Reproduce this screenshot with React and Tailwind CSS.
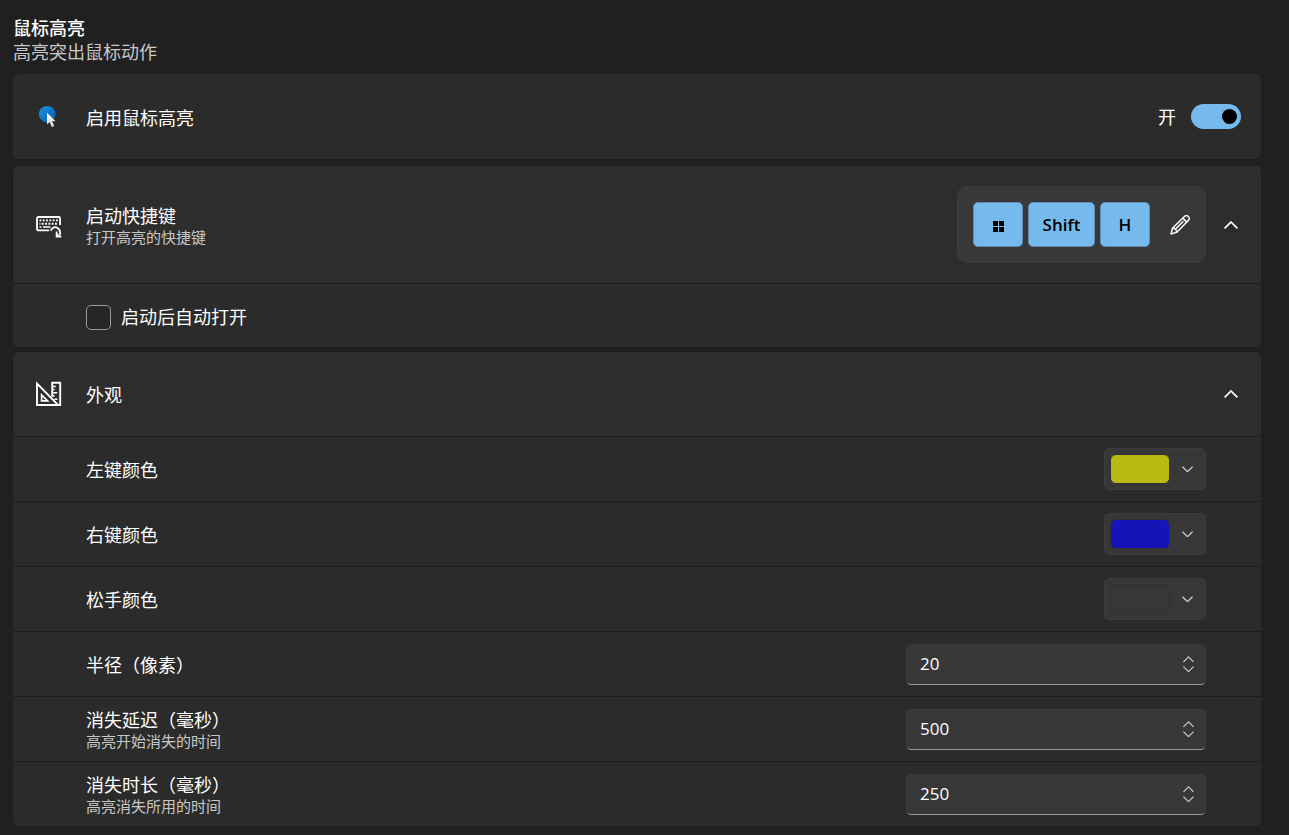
import { useState } from 'react';

const cardClass = "rounded-[6px] border border-[#1e1e1e] bg-[#2b2b2b] overflow-hidden";
const rowClass = "flex items-center justify-between border-t border-[#1d1d1d] pl-[73px] pr-[55px]";

function MouseIcon() {
  return (
    <svg width="26" height="26" viewBox="0 0 26 26" aria-hidden="true">
      <defs>
        <linearGradient id="spot" x1="0" y1="0" x2="1" y2="1">
          <stop offset="0" stopColor="#1a94dd" />
          <stop offset="1" stopColor="#0a5bb0" />
        </linearGradient>
        <linearGradient id="pointer" x1="0" y1="0" x2="0" y2="1">
          <stop offset="0" stopColor="#ffffff" />
          <stop offset="1" stopColor="#d8d8d8" />
        </linearGradient>
      </defs>
      <circle cx="11.2" cy="10.2" r="8.3" fill="url(#spot)" />
      <path d="M11 8.8v11.6l2.7-2.4 2 5.1 2.5-1-2.1-4.8h3.5z" fill="url(#pointer)" />
    </svg>
  );
}

function KeyboardIcon() {
  return (
    <svg width="26" height="26" viewBox="0 -4 26 26" fill="none" stroke="#fff" aria-hidden="true">
      <path d="M13 14.4H2.2a1.2 1.2 0 0 1-1.2-1.2V2.2A1.2 1.2 0 0 1 2.2 1h20.6A1.2 1.2 0 0 1 24 2.2V9" strokeWidth="1.8" />
      <path d="M3.5 4.4h18.5" strokeWidth="1.9" strokeDasharray="1.9 1.4" />
      <path d="M3.5 7.7h18.5" strokeWidth="1.9" strokeDasharray="1.9 1.4" strokeDashoffset="1" />
      <path d="M3.5 11h2M7 11h7.5" strokeWidth="1.7" />
      <path d="M14.8 14.6c1-3 4-4 6.2-3 2.6 1.2 3.4 3.6 3.2 7.6" strokeWidth="1.8" />
      <path d="M20.6 15.6v5h4.8" strokeWidth="1.7" />
      <path d="M20.4 16.4l4.2 4.2h-4.2z" fill="#fff" stroke="none" />
    </svg>
  );
}

function RulerIcon() {
  return (
    <svg width="26" height="26" viewBox="0 0 26 26" fill="none" stroke="#fff" strokeWidth="1.9" aria-hidden="true">
      <path d="M1 2.6V24h21.2z" />
      <path d="M5.6 13.8v6h6z" strokeWidth="1.7" />
      <path d="M16.2 15.6V1.8h8V24h-3" />
      <path d="M16.2 5.4h3.6M16.2 8.6h2.4M16.2 11.8h5M16.2 15h2.4M18.4 18.2h3" strokeWidth="1.5" />
    </svg>
  );
}

function PencilIcon() {
  return (
    <svg width="20" height="20" viewBox="0 0 20 20" fill="none" stroke="#fff" strokeWidth="1.5" strokeLinejoin="round" aria-hidden="true">
      <path d="M1 19l1.5-5.8L14.4 1.5a2.6 2.6 0 0 1 3.9 0 2.6 2.6 0 0 1 0 3.9L6.6 17.4z" />
      <path d="M12.8 3.1l4 4M2.5 13.2c2.4 0 4 1.6 4.1 4.2M4.8 14.8l8.6-8.6" />
    </svg>
  );
}

function Chevron({ up, size = 14, stroke = 1.7, color = "#fff" }) {
  return (
    <svg width={size} height={size / 2 + 1} viewBox="0 0 14 8" fill="none" stroke={color} strokeWidth={stroke} aria-hidden="true">
      <path d={up ? "M.6 7.3L7 1l6.4 6.3" : "M.6.7L7 7 13.4.7"} />
    </svg>
  );
}

function WindowsLogo() {
  return (
    <svg width="11" height="11" viewBox="0 0 11 11" fill="#000" className="mt-1" aria-hidden="true">
      <path d="M0 0h5v5H0zM6 0h5v5H6zM0 6h5v5H0zM6 6h5v5H6z" />
    </svg>
  );
}

function Key({ children, wide }) {
  return (
    <kbd className={`${wide ? "w-[67px]" : "w-[50px]"} h-[45px] flex items-center justify-center rounded-[5px] border border-[#5f8db3] bg-[#76b9ed] text-[17px] font-semibold text-black [font-family:'Open_Sans',sans-serif]`}>
      {children}
    </kbd>
  );
}

function Label({ title, note, htmlFor }) {
  return (
    <label htmlFor={htmlFor} className="flex flex-col pt-0.5">
      <span className="text-[18px] leading-[22px] text-white">{title}</span>
      {note && <span className="text-[15px] leading-5 text-[#c8c8c8]">{note}</span>}
    </label>
  );
}

function ColorRow({ id, title, swatch }) {
  return (
    <div className={`${rowClass} h-[65px]`}>
      <Label title={title} htmlFor={id} />
      <button id={id} className="flex h-[42px] w-[102px] items-center rounded-[5px] border border-[#3d3d3d] bg-[#373737] pl-[5px]">
        <span className={`h-[30px] w-[60px] rounded-[6px] border border-[#313131] ${swatch}`}></span>
        <span className="ml-3"><Chevron size={11} stroke={1.7} color="#d0d0d0" /></span>
      </button>
    </div>
  );
}

function NumberRow({ id, title, note, initial }) {
  const [value, setValue] = useState(initial);

  return (
    <div className={`${rowClass} h-[65px]`}>
      <Label title={title} note={note} htmlFor={id} />
      <div className="flex h-[41px] w-[300px] items-center rounded-[5px] border border-[#3b3b3b] border-b-[#9a9a9a] bg-[#373737] pl-[13px] pr-[11px]">
        <input
          id={id}
          type="number"
          value={value}
          onChange={(e) => setValue(Number(e.target.value))}
          className="min-w-0 flex-1 bg-transparent text-[17px] text-white outline-none [appearance:textfield] [&::-webkit-inner-spin-button]:appearance-none"
        />
        <div className="flex flex-col gap-[3px]">
          <button aria-label="增加" onClick={() => setValue(value + 1)}><Chevron up size={11} stroke={1.6} color="#c8c8c8" /></button>
          <button aria-label="减少" onClick={() => setValue(value - 1)}><Chevron size={11} stroke={1.6} color="#c8c8c8" /></button>
        </div>
      </div>
    </div>
  );
}

export default function App() {
  const [enabled, setEnabled] = useState(true);
  const [autoStart, setAutoStart] = useState(false);

  return (
    <main className="min-h-screen bg-[#202020] pt-4 pr-[27px] pb-2 pl-3 text-white [font-family:'Open_Sans','Noto_Sans_CJK_SC',sans-serif] [&_button]:block [&_button.flex]:flex [&_svg]:block">
      <header className="mb-[9px] pl-px">
        <h1 className="text-[18px] font-medium leading-6">鼠标高亮</h1>
        <p className="text-[18px] leading-6 text-[#c8c8c8]">高亮突出鼠标动作</p>
      </header>

      <div className="flex flex-col gap-[5px]">
        <section className={`${cardClass} flex h-[87px] items-center pl-[23px] pr-[20px]`}>
          <MouseIcon />
          <div className="ml-6 flex-1"><Label title="启用鼠标高亮" htmlFor="enable" /></div>
          <span className="mr-[15px] text-[18px] leading-[22px]">{enabled ? "开" : "关"}</span>
          <input
            id="enable"
            type="checkbox"
            role="switch"
            checked={enabled}
            onChange={(e) => setEnabled(e.target.checked)}
            className="flex h-[25px] w-[50px] appearance-none items-center rounded-full bg-[#454545] px-1 before:block before:size-[15px] before:rounded-full before:bg-[#cfcfcf] checked:justify-end checked:bg-[#76b9ed] checked:before:bg-black"
          />
        </section>

        <div className="flex flex-col gap-[3px]">
          <section className={cardClass}>
            <div className="flex h-[117px] items-center bg-[#2d2d2d] px-[23px]">
              <KeyboardIcon />
              <div className="ml-6 flex-1"><Label title="启动快捷键" note="打开高亮的快捷键" htmlFor="shortcut" /></div>
              <div className="flex items-center gap-[5px] rounded-[10px] border border-[#3c3c3c] bg-[#383838] p-[15px]">
                <Key><WindowsLogo /></Key>
                <Key wide>Shift</Key>
                <Key>H</Key>
                <button id="shortcut" aria-label="编辑快捷键" className="ml-[15px]"><PencilIcon /></button>
              </div>
              <button aria-label="折叠" className="ml-[18px]"><Chevron up /></button>
            </div>
            <div className={`${rowClass} h-16`}>
              <label className="flex items-center gap-[10px] pt-[3px] text-[18px] leading-[22px]">
                <input
                  type="checkbox"
                  checked={autoStart}
                  onChange={(e) => setAutoStart(e.target.checked)}
                  className="size-[25px] appearance-none rounded-[5px] border border-[#9a9a9a] bg-[#262626] checked:bg-[#76b9ed]"
                />
                启动后自动打开
              </label>
            </div>
          </section>

          <section className={cardClass}>
            <div className="flex h-[84px] items-center bg-[#2d2d2d] px-[23px]">
              <RulerIcon />
              <h2 className="ml-6 flex-1 pt-0.5 text-[18px] leading-[22px]">外观</h2>
              <button aria-label="折叠"><Chevron up /></button>
            </div>
            <ColorRow id="left" title="左键颜色" swatch="bg-[#b9b914]" />
            <ColorRow id="right" title="右键颜色" swatch="bg-[#1414b9]" />
            <ColorRow id="always" title="松手颜色" swatch="bg-[#373737]" />
            <NumberRow id="radius" title="半径（像素）" initial={20} />
            <NumberRow id="delay" title="消失延迟（毫秒）" note="高亮开始消失的时间" initial={500} />
            <NumberRow id="duration" title="消失时长（毫秒）" note="高亮消失所用的时间" initial={250} />
          </section>
        </div>
      </div>
    </main>
  );
}
